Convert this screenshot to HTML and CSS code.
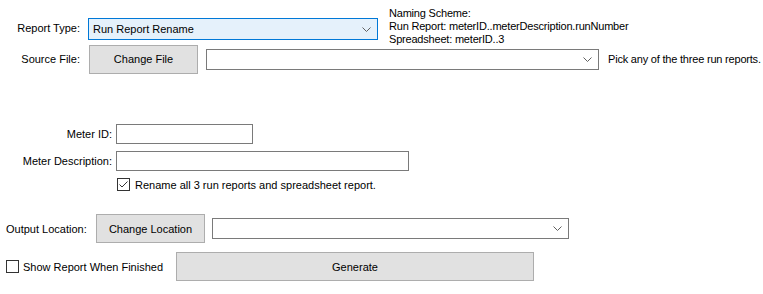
FILE: index.html
```
<!DOCTYPE html>
<html lang="en">
<head>
    <meta charset="UTF-8">
    <title>Report Tool</title>
    <link rel="stylesheet" href="styles.css">
</head>
<body>
    <div class="form">
        <div class="row row-type">
            <label class="label label-top">Report Type:</label>
            <div class="combo combo-type focused">
                <span class="combo-text">Run Report Rename</span>
                <svg class="chevron" width="9" height="5" viewBox="0 0 9 5"><polyline points="0.5,0.5 4.5,4.5 8.5,0.5" fill="none" stroke="#606060" stroke-width="1"/></svg>
            </div>
            <div class="naming">
                <div>Naming Scheme:</div>
                <div>Run Report: meterID..meterDescription.runNumber</div>
                <div>Spreadsheet: meterID..3</div>
            </div>
        </div>

        <div class="row row-source">
            <label class="label">Source File:</label>
            <button class="btn btn-file">Change File</button>
            <div class="combo combo-source">
                <span class="combo-text"></span>
                <svg class="chevron" width="9" height="5" viewBox="0 0 9 5"><polyline points="0.5,0.5 4.5,4.5 8.5,0.5" fill="none" stroke="#606060" stroke-width="1"/></svg>
            </div>
            <span class="hint">Pick any of the three run reports.</span>
        </div>

        <div class="row row-meter-id">
            <label class="label label-wide">Meter ID:</label>
            <input class="textbox textbox-id" type="text">
        </div>

        <div class="row row-meter-desc">
            <label class="label label-wide">Meter Description:</label>
            <input class="textbox textbox-desc" type="text">
        </div>

        <div class="row row-rename">
            <span class="check checked">
                <svg width="11" height="11" viewBox="0 0 11 11"><polyline points="1.5,5.5 4,8 9.5,2.5" fill="none" stroke="#333" stroke-width="1"/></svg>
            </span>
            <span class="check-label">Rename all 3 run reports and spreadsheet report.</span>
        </div>

        <div class="row row-output">
            <label class="label label-output">Output Location:</label>
            <button class="btn btn-location">Change Location</button>
            <div class="combo combo-output">
                <span class="combo-text"></span>
                <svg class="chevron" width="9" height="5" viewBox="0 0 9 5"><polyline points="0.5,0.5 4.5,4.5 8.5,0.5" fill="none" stroke="#606060" stroke-width="1"/></svg>
            </div>
        </div>

        <div class="row row-generate">
            <span class="check"></span>
            <span class="check-label show-label">Show Report When Finished</span>
            <button class="btn btn-generate">Generate</button>
        </div>
    </div>
</body>
</html>
```

FILE: styles.css
```
/* WinForms-like report dialog */
body {
    margin: 0;
    background-color: #ffffff;
    color: #000000;
    font-family: 'Liberation Sans', Arial, sans-serif;
    font-size: 11px;
    width: 763px;
    height: 294px;
    overflow: hidden;
}

.form {
    padding-top: 7px;
}

.row {
    display: flex;
    align-items: center;
}

.label {
    text-align: right;
    white-space: nowrap;
}

/* first row */
.row-type {
    align-items: flex-start;
    height: 38px;
}

.row-type .label {
    width: 80px;
    margin-top: 15px;
}

.combo {
    box-sizing: border-box;
    display: flex;
    align-items: center;
    justify-content: space-between;
    background-color: #ffffff;
    border: 1px solid #7a7a7a;
    height: 21px;
    padding: 0 6px 0 4px;
}

.combo.focused {
    background-color: #e5f1fb;
    border-color: #0078d7;
}

.combo-type {
    width: 290px;
    height: 22px;
    margin-left: 8px;
    margin-top: 11px;
}

.naming {
    margin-left: 11px;
    line-height: 13px;
    letter-spacing: -0.2px;
}

/* source file */
.row-source {
    height: 28px;
}

.row-source .label {
    width: 80px;
}

.btn {
    box-sizing: border-box;
    background-color: #e1e1e1;
    border: 1px solid #adadad;
    font-family: inherit;
    font-size: 11px;
    color: #000000;
    padding: 0;
    height: 29px;
}

.btn-file {
    width: 109px;
    margin-left: 9px;
}

.combo-source {
    width: 393px;
    margin-left: 8px;
}

.hint {
    margin-left: 9px;
    white-space: nowrap;
    letter-spacing: -0.2px;
}

/* meter fields */
.row-meter-id {
    margin-top: 51px;
}

.label-wide {
    width: 112px;
}

.textbox {
    box-sizing: border-box;
    border: 1px solid #7a7a7a;
    height: 20px;
    margin: 0 0 0 4px;
    padding: 0;
    background-color: #ffffff;
    outline: none;
}

.textbox-id {
    width: 137px;
}

.row-meter-desc {
    margin-top: 7px;
}

.textbox-desc {
    width: 293px;
}

.row-rename {
    margin-top: 7px;
    padding-left: 117px;
}

.check {
    box-sizing: border-box;
    display: inline-flex;
    align-items: center;
    justify-content: center;
    width: 13px;
    height: 13px;
    border: 1px solid #333333;
    background-color: #ffffff;
}

.check-label {
    margin-left: 5px;
    white-space: nowrap;
}

/* output */
.row-output {
    margin-top: 23px;
}

.label-output {
    width: 77px;
    text-align: left;
    padding-left: 6px;
    box-sizing: border-box;
}

.btn-location {
    width: 109px;
    margin-left: 19px;
}

.combo-output {
    width: 357px;
    margin-left: 7px;
}

.row-generate {
    margin-top: 9px;
    padding-left: 6px;
}

.show-label {
    margin-left: 4px;
    width: 153px;
}

.btn-generate {
    width: 358px;
}
```
